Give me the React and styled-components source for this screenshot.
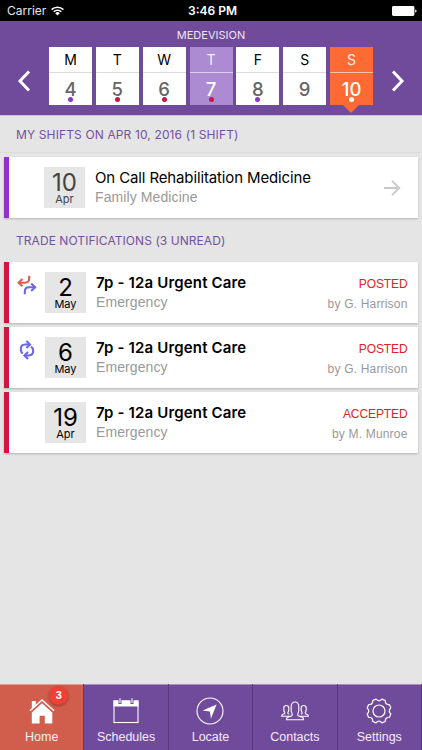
import React from "react";
import styled, { createGlobalStyle } from "styled-components";

const week = [
  { letter: "M", day: 4, dot: "#8e35c4" },
  { letter: "T", day: 5, dot: "#cf1440" },
  { letter: "W", day: 6, dot: "#cf1440" },
  { letter: "T", day: 7, dot: "#cf1440", today: true },
  { letter: "F", day: 8, dot: "#8e35c4" },
  { letter: "S", day: 9 },
  { letter: "S", day: 10, dot: "#fff", selected: true },
];

const trades = [
  { id: 1, icon: "swap", day: 2, month: "May", status: "POSTED", by: "by G. Harrison" },
  { id: 2, icon: "cycle", day: 6, month: "May", status: "POSTED", by: "by G. Harrison" },
  { id: 3, day: 19, month: "Apr", status: "ACCEPTED", by: "by M. Munroe" },
];

const WifiIcon = () => (
  <svg width="13" height="10" viewBox="0 0 13 10">
    <g fill="none" stroke="#fff" strokeWidth="1.5">
      <path d="M.6 3.6a8.4 8.4 0 0 1 11.8 0" />
      <path d="M2.7 5.7a5.4 5.4 0 0 1 7.6 0" />
    </g>
    <path d="M6.5 9.6 4.2 7.2a3.3 3.3 0 0 1 4.6 0z" fill="#fff" />
  </svg>
);

const BatteryIcon = () => (
  <svg width="25" height="10" viewBox="0 0 25 10">
    <rect width="22.4" height="10" rx="1.4" fill="#fff" />
    <path d="M23.2 3.4q1.4.2 1.4 1.6t-1.4 1.6z" fill="#fff" />
  </svg>
);

const Chevron = ({ flip }) => (
  <svg width="14" height="22" viewBox="0 0 14 22">
    <path
      d={flip ? "M2 1.5 11 11 2 20.5" : "M12 1.5 3 11l9 9.5"}
      fill="none"
      stroke="#fff"
      strokeWidth="3"
    />
  </svg>
);

const ArrowIcon = () => (
  <svg width="17" height="16" viewBox="0 0 17 16">
    <path d="M0 8h15M8 .9 15.2 8 8 15.1" fill="none" stroke="#c9c9c9" strokeWidth="1.9" />
  </svg>
);

const SwapIcon = () => (
  <svg width="20" height="20" viewBox="0 0 20 20" fill="none" strokeWidth="2.1">
    <path d="M12.2 .8v2.6q0 4.3-4.3 4.3H2.4" stroke="#d65f50" />
    <path d="M5.4 4 1.6 7.7l3.8 3.6" stroke="#d65f50" />
    <path d="M7.8 19.2v-2.6q0-4.4 4.3-4.4H17" stroke="#6b67ee" />
    <path d="m14.2 8.4 3.9 3.8-3.9 3.7" stroke="#6b67ee" />
  </svg>
);

const CycleIcon = () => (
  <svg width="16" height="20" viewBox="0 0 16 20" fill="none" stroke="#6b67ee" strokeWidth="2.1">
    <path d="M3.6 13.6Q1.8 12 1.8 9.5 1.8 4.5 6 4.5h4" />
    <path d="M7.4 1 11 4.5 7.4 8" />
    <path d="M12 6.6q2.2 1.3 2.2 4 0 4.9-4.4 4.9H5.8" />
    <path d="M9 12 5.4 15.5 9 19" />
  </svg>
);

const HomeIcon = () => (
  <svg width="26" height="26" viewBox="0 0 26 26" fill="#fff">
    <path d="M2.8 3h4v4L2.8 10.6z" />
    <path d="M1 12.8 13 2l12 10.8" fill="none" stroke="#fff" strokeWidth="1.5" />
    <path d="M13 5.2 23.3 14.4v11h-7.5v-7.6h-5.2v7.6H2.8v-11z" />
  </svg>
);

const CalendarIcon = () => (
  <svg width="26" height="26" viewBox="0 0 26 26">
    <rect x="1" y="3" width="24" height="21.5" fill="none" stroke="#fff" strokeWidth="1.1" />
    <path d="M.5 2.5h25v6H.5z" fill="#fff" />
    <path d="M7 1v5M19 1v5" stroke="#704a9b" strokeWidth="3" />
    <path d="M7 .3v4.6M19 .3v4.6" stroke="#fff" strokeWidth="1.1" />
  </svg>
);

const LocateIcon = () => (
  <svg width="28" height="28" viewBox="0 0 28 28">
    <circle cx="14" cy="14" r="13" fill="none" stroke="#fff" strokeWidth="1.1" />
    <path d="M20.6 7.6 14.9 21.8 13.9 14.6 6.6 13.5z" fill="#fff" />
  </svg>
);

const ContactsIcon = () => (
  <svg width="28" height="20" viewBox="0 0 28 20" fill="none" stroke="#fff" strokeWidth="1.1">
    <path d="M5.4 18.8q0-2.4 2-2.9l2.8-.8q1.5-.5.9-2.3-1.3-2.6-1-6.8Q10.3 1 14 1t3.9 5q.3 4.2-1 6.8-.6 1.8.9 2.3l2.8.8q2 .5 2 2.9z" />
    <path d="M8.6 15.2H.6q0-1.6 1.4-2 2.3-.4 1.6-1.9-1-1.8-.9-4.1.2-2.7 2.6-2.7t2.6 2.7q.1 2.3-.9 4.1-.6 1.4 1.2 1.8" />
    <path d="M19.4 15.2h8q0-1.6-1.4-2-2.3-.4-1.6-1.9 1-1.8.9-4.1-.2-2.7-2.6-2.7t-2.6 2.7q-.1 2.3.9 4.1.6 1.4-1.2 1.8" />
  </svg>
);

const point = (r, deg) => {
  const a = (deg * Math.PI) / 180;
  return `${(13 + r * Math.sin(a)).toFixed(2)} ${(13 - r * Math.cos(a)).toFixed(2)}`;
};

// eight teeth, with a rounded valley between each pair
const gearPath =
  [0, 45, 90, 135, 180, 225, 270, 315]
    .map((a, i) => `${i ? "L" : "M"}${point(12.2, a - 14)}Q${point(8.6, a)} ${point(12.2, a + 14)}`)
    .join("") + "Z";

const GearIcon = () => (
  <svg width="26" height="26" viewBox="0 0 26 26" fill="none" stroke="#fff" strokeWidth="1.2">
    <path d={gearPath} strokeLinejoin="round" />
    <circle cx="13" cy="13" r="6" />
  </svg>
);

const tabs = [
  { label: "Home", icon: <HomeIcon />, badge: 3, active: true },
  { label: "Schedules", icon: <CalendarIcon /> },
  { label: "Locate", icon: <LocateIcon /> },
  { label: "Contacts", icon: <ContactsIcon /> },
  { label: "Settings", icon: <GearIcon /> },
];

export default function App() {
  return (
    <Screen>
      <GlobalStyle />
      <StatusBar>
        <Carrier>
          Carrier <WifiIcon />
        </Carrier>
        <Clock>3:46 PM</Clock>
        <BatteryIcon />
      </StatusBar>

      <Header>
        <Title>MEDEVISION</Title>
        <WeekRow>
          <Chevron />
          <Week>
            {week.map((d) => (
              <Day key={d.day} $today={d.today} $selected={d.selected}>
                <Letter>{d.letter}</Letter>
                <Num $light={d.today || d.selected}>
                  {d.day}
                  {d.dot && <Dot $color={d.dot} />}
                </Num>
              </Day>
            ))}
          </Week>
          <Chevron flip />
        </WeekRow>
      </Header>

      <Main>
        <SectionTitle $line>MY SHIFTS ON APR 10, 2016 (1 SHIFT)</SectionTitle>
        <Card $color="#9331c6">
          <IconCell />
          <DateBox $muted>
            <b>10</b>
            <span>Apr</span>
          </DateBox>
          <Info>
            <Name>On Call Rehabilitation Medicine</Name>
            <Dept>Family Medicine</Dept>
          </Info>
          <ArrowCell>
            <ArrowIcon />
          </ArrowCell>
        </Card>

        <SectionTitle $second>TRADE NOTIFICATIONS (3 UNREAD)</SectionTitle>
        <List>
          {trades.map((t) => (
            <Card key={t.id} $color="#d3143f">
              <IconCell>
                {t.icon === "swap" && <SwapIcon />}
                {t.icon === "cycle" && <CycleIcon />}
              </IconCell>
              <DateBox>
                <b>{t.day}</b>
                <span>{t.month}</span>
              </DateBox>
              <Info>
                <Name $bold>7p - 12a Urgent Care</Name>
                <Dept>Emergency</Dept>
              </Info>
              <Status>
                <strong>{t.status}</strong>
                <span>{t.by}</span>
              </Status>
            </Card>
          ))}
        </List>
      </Main>

      <TabBar>
        {tabs.map((t) => (
          <Tab key={t.label} $active={t.active}>
            <TabIcon>
              {t.icon}
              {t.badge && <Badge>{t.badge}</Badge>}
            </TabIcon>
            <span>{t.label}</span>
          </Tab>
        ))}
      </TabBar>
    </Screen>
  );
}

const GlobalStyle = createGlobalStyle`
  * {
    box-sizing: border-box;
  }
  body {
    margin: 0;
    font-family: Inter, "Liberation Sans", sans-serif;
  }
  svg {
    display: block;
    flex-shrink: 0;
  }
`;

const Screen = styled.div`
  display: flex;
  flex-direction: column;
  width: 422px;
  height: 750px;
  overflow: hidden;
  background: #e5e5e5;
`;

const StatusBar = styled.div`
  display: grid;
  grid-template-columns: 1fr auto 1fr;
  align-items: center;
  height: 21px;
  padding: 0 5px 0 7px;
  background: #000;
  color: #fff;
  font-size: 12px;

  > svg {
    justify-self: end;
  }
`;

const Carrier = styled.div`
  display: flex;
  align-items: center;
  gap: 5px;
  color: #e8e8e8;
`;

const Clock = styled.div`
  padding-left: 1px;
  font-weight: 600;
`;

const Header = styled.header`
  height: 94px;
  padding-top: 7px;
  background: #704a9b;
  box-shadow: 0 1px #cdc3d8;
`;

const Title = styled.div`
  height: 19px;
  line-height: 15px;
  font-size: 11px;
  text-align: center;
  color: #eee6f5;
`;

const WeekRow = styled.div`
  display: flex;
  align-items: center;
  justify-content: space-between;
  padding: 0 17px;

  > svg {
    margin-top: 9px;
  }
`;

const Week = styled.div`
  display: grid;
  grid-template-columns: repeat(7, 43px);
  gap: 3.85px;
`;

const Day = styled.div`
  position: relative;
  height: 58px;
  text-align: center;
  background: ${(p) => (p.$selected ? "#fd6a33" : p.$today ? "#ac8bd3" : "#fff")};
  color: ${(p) => (p.$selected || p.$today ? "#fbeef0" : "#000")};

  &::after {
    content: "";
    display: ${(p) => (p.$selected ? "block" : "none")};
    position: absolute;
    left: 13px;
    top: 100%;
    border: 8.5px solid transparent;
    border-top-color: #fd6a33;
    border-bottom: 0;
  }
`;

const Letter = styled.div`
  height: 25px;
  line-height: 26px;
  font-size: 14px;
`;

const Num = styled.div`
  position: relative;
  height: 33px;
  border-top: 1px solid ${(p) => (p.$light ? "rgba(255, 255, 255, 0.6)" : "#dcdcdc")};
  line-height: 32px;
  font-size: 18.5px;
  font-weight: 500;
  color: ${(p) => (p.$light ? "#fff" : "#666")};
`;

const Dot = styled.i`
  position: absolute;
  left: 19px;
  bottom: 3px;
  width: 5px;
  height: 5px;
  border-radius: 50%;
  background: ${(p) => p.$color};
`;

const Main = styled.main`
  flex: 1;
`;

const SectionTitle = styled.h2`
  height: ${(p) => (p.$second ? 44 : 38)}px;
  margin: 0 0 ${(p) => (p.$line ? 4 : 0)}px;
  padding-left: 16px;
  border-bottom: ${(p) => (p.$line ? "1px solid #dbdbdb" : "0")};
  line-height: ${(p) => (p.$second ? 45 : 39)}px;
  font-size: 12px;
  font-weight: 400;
  letter-spacing: ${(p) => (p.$second ? 0.06 : 0.13)}px;
  color: #7350a0;
`;

const List = styled.div`
  display: flex;
  flex-direction: column;
  gap: 4px;
`;

const Card = styled.div`
  display: flex;
  height: 61px;
  margin: 0 4px;
  padding-right: 10.5px;
  border-left: 5.5px solid ${(p) => p.$color};
  background: #fff;
  box-shadow: 0 1px 2px rgba(0, 0, 0, 0.22);
`;

const IconCell = styled.div`
  display: flex;
  justify-content: center;
  width: 36px;
  padding-top: 13px;
`;

const DateBox = styled.div`
  display: flex;
  flex-direction: column;
  align-items: center;
  width: 41px;
  height: 41px;
  margin: 10px 10px 0 ${(p) => (p.$muted ? "-1px" : 0)};
  padding-top: 4px;
  background: #e6e6e6;
  color: ${(p) => (p.$muted ? "#444" : "#000")};

  b {
    font-size: 24px;
    font-weight: 400;
    line-height: 23px;
  }
  span {
    font-size: 11px;
    line-height: 11px;
  }
`;

const Info = styled.div`
  flex: 1;
  padding-top: 11px;
  white-space: nowrap;
`;

const Name = styled.div`
  font-size: 15px;
  font-weight: ${(p) => (p.$bold ? 600 : 400)};
  letter-spacing: ${(p) => (p.$bold ? 0.16 : -0.13)}px;
  line-height: 19px;
  color: #000;
`;

const Dept = styled.div`
  font-family: "Liberation Sans", sans-serif;
  font-size: 14px;
  letter-spacing: 0.1px;
  line-height: 20px;
  color: #999;
`;

const ArrowCell = styled.div`
  display: flex;
  align-items: center;
  padding-right: 7px;
`;

const Status = styled.div`
  display: flex;
  flex-direction: column;
  align-items: flex-end;
  padding-top: 12px;
  font-family: "Liberation Sans", sans-serif;
  font-size: 12px;
  line-height: 20px;

  strong {
    font-weight: 400;
    letter-spacing: -0.1px;
    color: #dc2626;
  }
  span {
    letter-spacing: 0.18px;
    color: #999;
  }
`;

const TabBar = styled.nav`
  display: grid;
  grid-template-columns: repeat(5, 1fr);
  height: 66px;
`;

const Tab = styled.div`
  display: flex;
  flex-direction: column;
  align-items: center;
  padding-top: 11px;
  border-right: 1px solid #59397f;
  background: ${(p) => (p.$active ? "#d15e4c" : "#704a9b")};
  box-shadow: inset 0 1px rgba(255, 255, 255, 0.4);
  color: #f4edf8;
  font-family: "Liberation Sans", sans-serif;
  font-size: 12.5px;
  line-height: 21px;
`;

const TabIcon = styled.div`
  position: relative;
  display: flex;
  align-items: center;
  justify-content: center;
  width: 28px;
  height: 32px;
`;

const Badge = styled.div`
  position: absolute;
  left: 21.5px;
  top: -9px;
  width: 19px;
  height: 19px;
  border-radius: 50%;
  background: #ee4035;
  box-shadow: 0 1px 3px rgba(0, 0, 0, 0.35);
  font-size: 11px;
  font-weight: 700;
  line-height: 19px;
  text-align: center;
  color: #fff;
`;
